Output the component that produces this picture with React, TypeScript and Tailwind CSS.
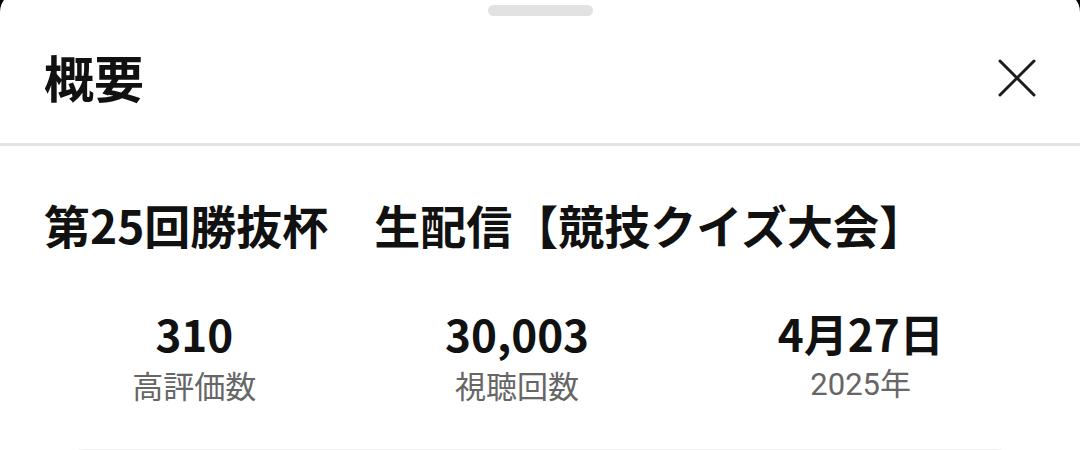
import React from "react";

const jp = { fontFamily: '"Noto Sans CJK JP", "Noto Sans", sans-serif' };

function Stat({ value, label, roboto }: { value: string; label: string; roboto?: boolean }) {
  return (
    <div className="flex flex-col items-center">
      <div className="text-[44px] font-bold leading-[46px] text-[#111111]">{value}</div>
      <div
        className="mt-[9px] text-[31px] leading-[40px] text-[#666666]"
        style={roboto ? { fontFamily: 'Roboto, "Noto Sans CJK JP", sans-serif' } : undefined}
      >
        {label}
      </div>
    </div>
  );
}

export default function App() {
  return (
    <div className="h-[450px] w-[1080px] overflow-hidden bg-black" style={jp}>
      <div className="-mt-[8px] flex flex-col rounded-t-[20px] bg-white">
        <div className="flex shrink-0 justify-center pt-[13px]">
          <div className="h-[11px] w-[105px] rounded-full bg-[#e2e2e2]" />
        </div>
        <div className="flex h-[127px] shrink-0 items-center justify-between pb-[8px] pl-[44px] pr-[43px]">
          <div className="text-[50px] font-bold leading-none text-[#111111]">概要</div>
          <svg width="40" height="40" viewBox="0 0 40 40" className="mt-[4px]">
            <path d="M3 3 L37 37 M37 3 L3 37" stroke="#1c1c1c" strokeWidth="3" strokeLinecap="round" />
          </svg>
        </div>
        <div className="h-[3px] shrink-0 bg-[#e4e4e4]" />
        <div className="pl-[44px] pt-[52px] text-[46px] font-bold leading-[52px] text-[#111111]">
          第25回勝抜杯　生配信【競技クイズ大会】
        </div>
        <div className="mt-[60px] flex justify-around pl-[38px] pr-[42px]">
          <Stat value="310" label="高評価数" />
          <Stat value="30,003" label="視聴回数" />
          <Stat value="4月27日" label="2025年" roboto />
        </div>
        <div className="mx-[60px] mt-[44px] h-[60px] shrink-0 rounded-t-[24px] bg-[#efefef]" />
      </div>
    </div>
  );
}
